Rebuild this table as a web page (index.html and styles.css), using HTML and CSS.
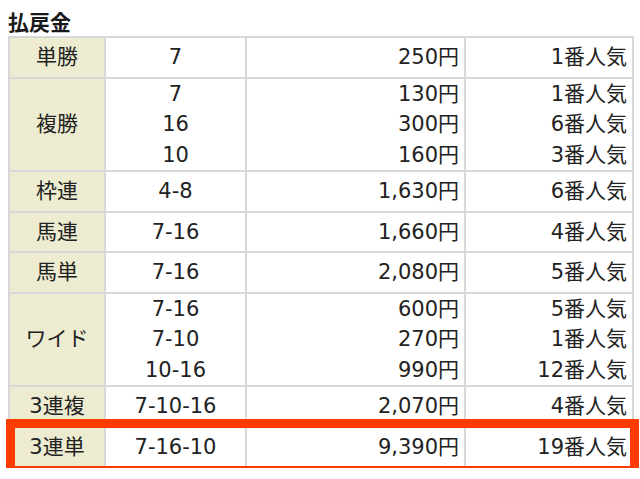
FILE: index.html
```html
<!DOCTYPE html>
<html lang="ja">
<head>
<meta charset="utf-8">
<title>払戻金</title>
<link rel="stylesheet" href="styles.css">
</head>
<body>
<h2 class="title">払戻金</h2>
<div class="wrap">
<table class="pay">
  <colgroup>
    <col class="c1"><col class="c2"><col class="c3"><col class="c4">
  </colgroup>
  <tr class="single"><th>単勝</th><td class="num">7</td><td class="yen">250円</td><td class="pop">1番人気</td></tr>
  <tr class="multi"><th>複勝</th><td class="num">7<br>16<br>10</td><td class="yen">130円<br>300円<br>160円</td><td class="pop">1番人気<br>6番人気<br>3番人気</td></tr>
  <tr class="single"><th>枠連</th><td class="num">4-8</td><td class="yen">1,630円</td><td class="pop">6番人気</td></tr>
  <tr class="single"><th>馬連</th><td class="num">7-16</td><td class="yen">1,660円</td><td class="pop">4番人気</td></tr>
  <tr class="single"><th>馬単</th><td class="num">7-16</td><td class="yen">2,080円</td><td class="pop">5番人気</td></tr>
  <tr class="multi"><th>ワイド</th><td class="num">7-16<br>7-10<br>10-16</td><td class="yen">600円<br>270円<br>990円</td><td class="pop">5番人気<br>1番人気<br>12番人気</td></tr>
  <tr class="single"><th>3連複</th><td class="num">7-10-16</td><td class="yen">2,070円</td><td class="pop">4番人気</td></tr>
  <tr class="single"><th>3連単</th><td class="num">7-16-10</td><td class="yen">9,390円</td><td class="pop">19番人気</td></tr>
</table>
<div class="highlight"></div>
</div>
</body>
</html>
```
FILE: styles.css
```css
html, body {
  margin: 0;
  padding: 0;
  background: #ffffff;
}
body {
  padding: 0 8px;
  font-family: "DejaVu Sans", "Noto Sans CJK JP", sans-serif;
  color: #222222;
}
.title {
  margin: 0;
  height: 36px;
  padding-top: 6px;
  box-sizing: border-box;
  font-family: "Noto Sans CJK JP", sans-serif;
  font-weight: 700;
  font-size: 21px;
  line-height: 30px;
  color: #1a1a1a;
}
.wrap {
  position: relative;
  width: 624px;
}
.pay {
  border-collapse: collapse;
  width: 624px;
  table-layout: fixed;
  font-size: 21px;
  line-height: 30.5px;
}
.c1 { width: 96px; }
.c2 { width: 141px; }
.c3 { width: 219px; }
.c4 { width: 168px; }
.pay th, .pay td {
  border: 2px solid #d8d8d8;
  padding: 0 5px;
  font-weight: 400;
  vertical-align: middle;
  white-space: nowrap;
}
.pay th {
  background: #edecd0;
  text-align: center;
}
.single th, .single td {
  padding-top: 4px;
  padding-bottom: 4px;
}
.num { text-align: center; }
.yen, .pop { text-align: right; }
.highlight {
  position: absolute;
  left: -2px;
  top: 383px;
  width: 633px;
  height: 56px;
  box-sizing: border-box;
  border: 9px solid #ff3c00;
  pointer-events: none;
}
```
